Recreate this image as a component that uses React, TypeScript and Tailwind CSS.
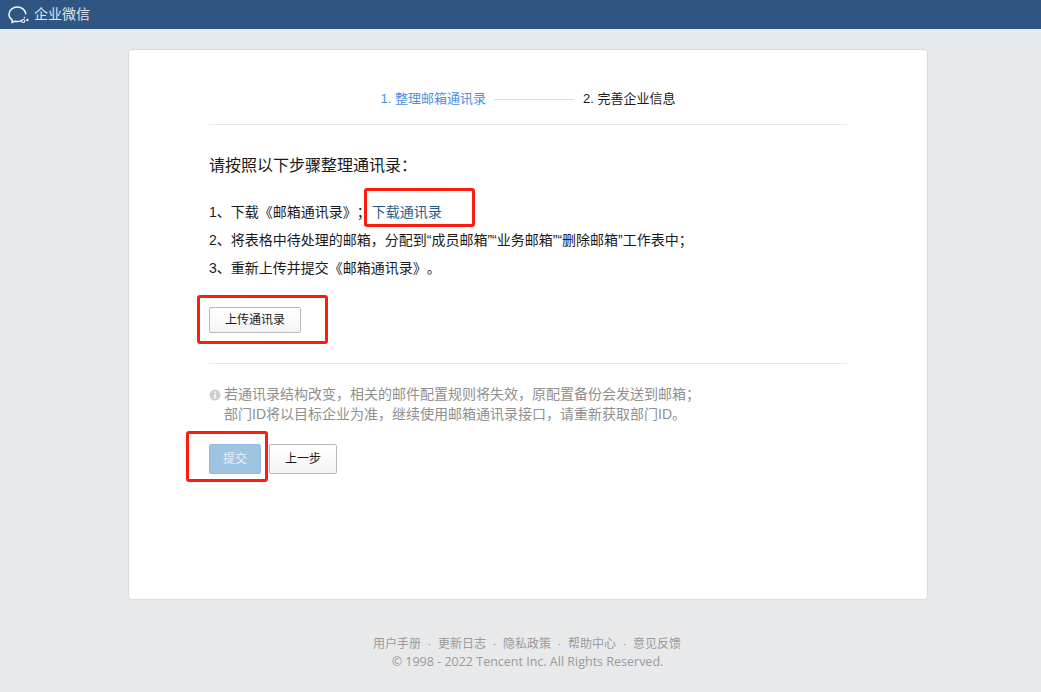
import React from "react";

function Logo() {
  return (
    <svg width="22" height="20" viewBox="0 0 22 20" fill="none" className="mr-[4px]">
      <path d="M13.5 15.6c-1.2.7-2.6 1-4.1 1-1 0-1.9-.1-2.8-.4l-2.6 1.5.3-2.6C2.3 13.7 1 11.700 1 9.500 1 5.300 4.800 2 9.400 2c4.300 0 7.900 2.900 8.300 6.700" stroke="#f2f5f8" strokeWidth="1.500" strokeLinecap="round" strokeLinejoin="round" />
      <circle cx="15.300" cy="16" r="1.500" stroke="#f2f5f8" strokeWidth="1.100" />
      <circle cx="19.400" cy="15" r="1.200" fill="#f2f5f8" />
      <circle cx="16.500" cy="12.600" r="0.800" fill="#f2f5f8" />
    </svg>
  );
}

function Mark({ className }: { className: string }) {
  return <div className={"absolute border-[3px] border-[#fb1d10] rounded-[3px] pointer-events-none " + className} />;
}

export default function App() {
  return (
    <div className="relative w-[1041px] h-[692px] overflow-hidden bg-[#e8e9eb] text-[14px] text-[#1a1a1a] [text-spacing-trim:space-all] [font-family:'Liberation_Sans','Noto_Sans_CJK_SC',sans-serif]">
      <header className="h-[29px] bg-[#2f5583] flex items-center pl-[8px] text-[#dfe6ee] text-[14px]">
        <Logo />
        <span>企业微信</span>
      </header>

      <main className="mt-[20px] ml-[128px] w-[800px] h-[551px] bg-white border border-[#d9dadc] rounded-[4px] px-[80px]">
        <div className="h-[75px] border-b border-[#e7e8ea] flex items-center justify-center pt-[24px] text-[13px]">
          <span className="text-[#4a90e2]">1. 整理邮箱通讯录</span>
          <span className="w-[80px] h-px bg-[#dfe0e2] ml-[8px] mr-[9px]" />
          <span className="text-[#1a1a1a]">2. 完善企业信息</span>
        </div>

        <p className="mt-[31px] text-[16px] leading-[20px]">请按照以下步骤整理通讯录：</p>

        <ol className="mt-[22px] leading-[28px]">
          <li className="h-[28px]">1、下载《邮箱通讯录》；<a className="ml-[1px] text-[#1e5f8f]">下载通讯录</a></li>
          <li className="h-[28px]">2、将表格中待处理的邮箱，分配到“成员邮箱”“业务邮箱”“删除邮箱”工作表中；</li>
          <li className="h-[28px]">3、重新上传并提交《邮箱通讯录》。</li>
        </ol>

        <button className="mt-[25px] w-[92px] h-[26px] flex items-center justify-center text-[12px] border border-[#b9b9bb] rounded-[2px] bg-gradient-to-b from-white to-[#f4f4f4] text-[#1a1a1a]">
          上传通讯录
        </button>

        <div className="mt-[30px] border-t border-[#e7e8ea] pt-[20px] text-[#8f8f8f] leading-[20px]">
          <div className="flex">
            <svg width="15" height="20" viewBox="0 0 15 20" className="shrink-0">
              <circle cx="6" cy="11" r="5.500" fill="#cfcfcf" />
              <rect x="5.300" y="10" width="1.500" height="4.500" fill="#fff" />
              <rect x="5.300" y="7.500" width="1.500" height="1.500" fill="#fff" />
            </svg>
            <p>若通讯录结构改变，相关的邮件配置规则将失效，原配置备份会发送到邮箱；<br />部门ID将以目标企业为准，继续使用邮箱通讯录接口，请重新获取部门ID。</p>
          </div>
        </div>

        <div className="mt-[20px] flex gap-[8px]">
          <button className="w-[52px] h-[30px] flex items-center justify-center text-[12px] text-[#e6eff7] bg-[#9fc3e2] border border-[#93bbdd] rounded-[2px]">提交</button>
          <button className="w-[68px] h-[30px] flex items-center justify-center text-[12px] border border-[#b9b9bb] rounded-[2px] bg-gradient-to-b from-white to-[#f4f4f4]">上一步</button>
        </div>
      </main>

      <footer className="mt-[35px] text-center text-[12px] leading-[18px] text-[#9a9a9c] ml-[14px]">
        <div className="-ml-[1px]">
          <span>用户手册</span><span className="mx-[6.5px]">·</span>
          <span>更新日志</span><span className="mx-[6.5px]">·</span>
          <span>隐私政策</span><span className="mx-[6.5px]">·</span>
          <span>帮助中心</span><span className="mx-[6.5px]">·</span>
          <span>意见反馈</span>
        </div>
        <div className="text-[12.500px] [font-family:'Open_Sans',sans-serif]">© 1998 - 2022 Tencent Inc. All Rights Reserved.</div>
      </footer>

      <Mark className="left-[364px] top-[188px] w-[111px] h-[39px]" />
      <Mark className="left-[197px] top-[295px] w-[131px] h-[49px]" />
      <Mark className="left-[186px] top-[431px] w-[82px] h-[51px]" />
    </div>
  );
}
